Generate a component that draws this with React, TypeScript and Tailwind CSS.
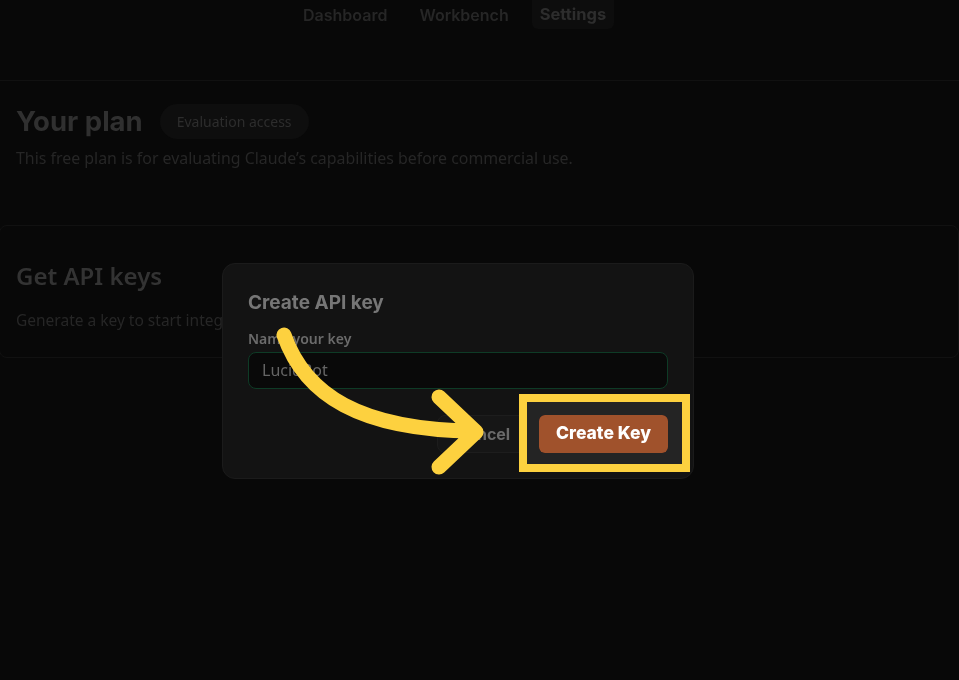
import React, { useState } from "react";

const tabs = ["Dashboard", "Workbench", "Settings"];

const App = (): JSX.Element => {
  const [keyName, setKeyName] = useState<string>("LucidBot");
  const active = "Settings";

  return (
    <div className="relative h-[680px] w-full overflow-hidden bg-[#080808] font-['Noto_Sans',sans-serif]">
      {/* top nav */}
      <nav className="flex h-[81px] items-start border-b border-[#111111] pl-[287px] font-['Inter',sans-serif]">
        {tabs.map((tab) => (
          <div
            key={tab}
            className={
              tab === active
                ? "ml-[7px] flex h-[29px] items-center rounded-b-md bg-[#0d0d0d] px-[8px] text-[16.5px] font-bold text-[#2d2d2d]"
                : "flex h-[29px] items-center px-[16px] text-[16px] font-semibold text-[#262626]"
            }
          >
            {tab}
          </div>
        ))}
      </nav>

      {/* plan */}
      <section className="px-4 pt-[20px]">
        <div className="flex items-center gap-[17px]">
          <h2 className="font-['Inter',sans-serif] text-[27.5px] font-bold text-[#303030]">Your plan</h2>
          <span className="flex h-[35px] items-center rounded-full bg-[#0e0e0e] px-[17px] text-[14px] text-[#2d2d2d]">
            Evaluation access
          </span>
        </div>
        <p className="mt-[5px] text-[15.9px] text-[#262626]">
          This free plan is for evaluating Claude’s capabilities before commercial use.
        </p>
      </section>

      {/* api keys */}
      <section className="-ml-px mt-[54px] h-[133px] rounded-lg border border-[#111111] px-[16px] pt-[32px]">
        <h2 className="text-[24px] font-semibold text-[#333333]">Get API keys</h2>
        <p className="mt-[15px] text-[15.5px] text-[#262626]">
          Generate a key to start integrating Claude into your applications.
        </p>
      </section>

      {/* modal */}
      <div className="absolute left-[222px] top-[263px] w-[472px] rounded-[13px] border border-[#1b1b1b] bg-[#131313] px-[25px] pb-[25px] pt-[25px]">
        <h3 className="font-['Inter',sans-serif] text-[19px] font-bold text-[#767676]">Create API key</h3>
        <label className="mt-[10px] block text-[14px] font-semibold text-[#6b6b6b]">Name your key</label>
        <input
          value={keyName}
          onChange={(e) => setKeyName(e.target.value)}
          className="mt-[3px] h-[37px] w-[420px] rounded-lg border border-[#0e3b26] bg-[#090909] px-[13px] text-[16px] text-[#656565] outline-none"
        />
        <div className="mt-[26px] flex justify-end gap-[10px]">
          <button className="h-[38px] w-[92px] rounded-lg border border-[#1d1d1d] bg-[#161616] font-['Inter',sans-serif] text-[16px] font-bold text-[#6a6a6a]">
            Cancel
          </button>
          <button className="h-[38px] w-[129px] rounded-md bg-[#a0522c] font-['Inter',sans-serif] text-[17.5px] font-extrabold text-white">
            Create Key
          </button>
        </div>
      </div>

      {/* annotation: highlight box */}
      <div className="absolute left-[519px] top-[394px] h-[78px] w-[171px] border-[8px] border-[#fdd13f]" />
      <div className="pointer-events-none absolute left-[527px] top-[402px] h-[62px] w-[155px] bg-[#242424] mix-blend-lighten" />

      {/* annotation: arrow */}
      <svg className="pointer-events-none absolute left-0 top-0" width="959" height="680" viewBox="0 0 959 680">
        <path
          d="M284 335 C 305 395, 360 430, 474 431"
          fill="none"
          stroke="#fdd13f"
          strokeWidth="15"
          strokeLinecap="round"
        />
        <path
          d="M439 397 L476 432 L439 467"
          fill="none"
          stroke="#fdd13f"
          strokeWidth="15"
          strokeLinecap="round"
          strokeLinejoin="round"
        />
      </svg>
    </div>
  );
};

export default App;
